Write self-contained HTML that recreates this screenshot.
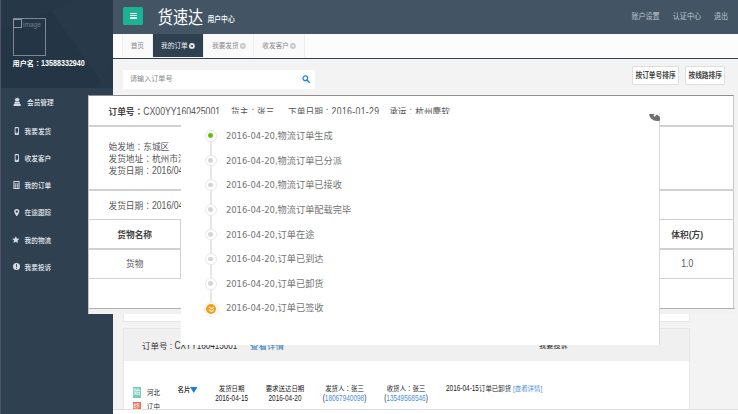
<!DOCTYPE html>
<html lang="zh-CN">
<head>
<meta charset="utf-8">
<title>货速达 用户中心</title>
<style>
html,body{margin:0;padding:0;}
body{width:738px;height:414px;overflow:hidden;position:relative;background:#f3f3f4;font-family:"Liberation Sans","Noto Sans CJK SC",sans-serif;font-size:6.7px;color:#333;}
.abs{position:absolute;}
.nw{white-space:nowrap;}
.L{display:inline-block;transform:scaleY(1.27);transform-origin:0 75%;}
#side{left:0;top:0;width:113px;height:414px;background:#2f4050;}
#sidehead{left:0;top:0;width:113px;height:87.5px;background:#293846;overflow:hidden;}
#edge{left:0;top:0;width:1.2px;height:414px;background:#4f5468;}
.mi{left:0;width:113px;height:27.4px;line-height:27.4px;color:#e3e8ed;font-weight:500;font-size:6.65px;white-space:nowrap;}
.mi span{position:absolute;left:24.5px;top:0.2px;transform:scaleY(1.1);transform-origin:0 50%;}
.mi svg{position:absolute;}
#top{left:113px;top:0;width:625px;height:33.5px;background:#435565;}
#hamb{left:123.1px;top:7px;width:20px;height:17.5px;background:#1ab394;border-radius:1.6px;}
#hamb i{position:absolute;left:6.5px;width:7px;height:1.2px;background:#fff;border-radius:.5px;}
#logo{left:157.8px;top:7.9px;font-size:15.1px;font-weight:400;color:#fff;line-height:20px;transform:scaleY(1.2);transform-origin:0 50%;}
#logo2{left:207.5px;top:14.1px;font-size:6.8px;color:#fff;font-weight:500;line-height:12px;transform:scaleY(1.18);transform-origin:0 50%;}
.tn{top:12.1px;font-size:7.05px;line-height:10px;color:#bcc5cd;transform:scaleY(1.12);transform-origin:0 50%;}
#tabs{left:113px;top:33.5px;width:625px;height:24px;background:#fcfcfc;border-bottom:1px solid #2f4050;}
.tab{top:0.9px;height:23.1px;line-height:23.4px;font-size:6.7px;color:#888;text-align:center;background:#fafafa;border-right:0.5px solid #eee;box-sizing:border-box;}
.tab.act{background:#2f4050;color:#e8edf0;}
.x{display:inline-block;width:5.8px;height:5.8px;vertical-align:-0.9px;margin-left:1.2px;}

#search{left:123px;top:70.3px;width:192.3px;height:18.3px;background:#fff;}
#search span{position:absolute;left:7px;top:0;line-height:18.5px;color:#888;font-size:7.1px;}
.btn{top:66px;height:17px;line-height:17px;border:0.6px solid #dedede;background:#fff;font-weight:bold;color:#444;font-size:6.7px;text-align:center;border-radius:1px;}
.btn span{display:inline-block;transform:scaleY(1.12);}
.panel{background:#fff;border:0.6px solid #e5e6e7;box-sizing:border-box;}
#dlg{left:87.6px;top:95.3px;width:646.2px;height:218.7px;background:#fff;box-sizing:border-box;border-top:1px solid #8e8e8e;border-left:0.8px solid #c4c4c4;border-right:0.7px solid #c8c8c8;border-bottom:0.5px solid #e2e2e2;font-size:8.7px;color:#555;}
.hl{left:0;width:645px;height:1.3px;background:#d0d0d0;}
.vl{width:1px;background:#d0d0d0;top:124px;height:59px;}
.c{width:92.1px;text-align:center;line-height:12px;}
#tl{left:181.2px;top:113.5px;width:478.5px;height:231.7px;overflow:hidden;background:#fff;border-right:0.8px solid #d8d8d8;box-sizing:border-box;}
.node{left:23.8px;width:11.8px;height:11.8px;border-radius:50%;background:#fff;border:1.2px solid #e7e7e7;box-sizing:border-box;}
.node i{position:absolute;left:2.3px;top:2.3px;width:4.8px;height:4.8px;border-radius:50%;background:#d4d4d4;}
.tt{left:44.7px;font-size:9.2px;line-height:12px;color:#747474;white-space:nowrap;}
.tt b{font-weight:normal;font-family:"DejaVu Sans","Liberation Sans",sans-serif;font-size:8.45px;}
.r{font-size:6.45px;line-height:10px;color:#222;text-align:center;white-space:nowrap;}
.r a{color:#4a8fd8;}
</style>
</head>
<body>
<!-- sidebar -->
<div id="side" class="abs"></div>
<div id="sidehead" class="abs">
<svg width="113" height="88" viewBox="0 0 113 88" style="position:absolute;left:0;top:0">
<rect width="113" height="88" fill="#263848"/>
<polygon points="0,30 51.600,11.500 101,80 95,88 0,88" fill="#243646"/>
<polygon points="51.600,11.500 75.700,0 113,0 113,88 106,88" fill="#283a4a"/>
<polygon points="101,80 113,60 113,88 95,88" fill="#273949"/>
</svg>
<div class="abs" style="left:12.5px;top:18px;width:33.300px;height:37.600px;border:0.6px solid #7d8893;box-sizing:border-box;"></div>
<div class="abs" style="left:13.3px;top:19.3px;width:9px;height:9px;border:0.6px solid #8c97a1;box-sizing:border-box;"></div>
<div class="abs nw" style="left:23px;top:20.8px;font-size:6.6px;line-height:8px;color:#707d89;">image</div>
<div class="abs nw" style="left:12.5px;top:59.1px;font-size:7.15px;line-height:10px;color:#fff;font-weight:bold;">用户名<span lang="zh-TW">：</span><span class="L">13588332940</span></div>
</div>
<div id="edge" class="abs"></div>

<div class="abs mi" style="top:88.4px"><svg viewBox="0 0 16 16" preserveAspectRatio="none" style="left:13.0px;top:8.600px;width:8.300px;height:9.000px"><path fill="#d6dce3" d="M8 0l.9 2.800 2.600-2-.9 3 3.200-.6-2.500 2.300L12.300 8H3.700l1-2.500L2.200 3.200l3.200.6-.9-3 2.600 2zM3.300 8.800h9.400l.9 3H2.400zM1.200 12.600h13.600V16H1.200z"/></svg><span style="left:27.0px">会员管理</span></div>
<div class="abs mi" style="top:117.6px"><svg viewBox="0 0 16 16" preserveAspectRatio="none" style="left:13.6px;top:9.3px;width:5.6px;height:7.9px"><path fill="#d6dce3" fill-rule="evenodd" d="M4.500 0h7A2.500 2.500 0 0 1 14 2.500v11A2.500 2.500 0 0 1 11.500 16h-7A2.500 2.500 0 0 1 2 13.500v-11A2.500 2.500 0 0 1 4.500 0zM4.500 2.500v9h7v-9zM8 12.700a1 1 0 1 0 0 2 1 1 0 0 0 0-2z"/></svg><span style="left:24.6px">我要发货</span></div>
<div class="abs mi" style="top:144.5px"><svg viewBox="0 0 16 16" preserveAspectRatio="none" style="left:13.6px;top:9.3px;width:5.6px;height:7.9px"><path fill="#d6dce3" fill-rule="evenodd" d="M4.500 0h7A2.500 2.500 0 0 1 14 2.500v11A2.500 2.500 0 0 1 11.500 16h-7A2.500 2.500 0 0 1 2 13.500v-11A2.500 2.500 0 0 1 4.500 0zM4.500 2.500v9h7v-9zM8 12.700a1 1 0 1 0 0 2 1 1 0 0 0 0-2z"/></svg><span style="left:24.6px">收发客户</span></div>
<div class="abs mi" style="top:171.6px"><svg viewBox="0 0 16 16" preserveAspectRatio="none" style="left:12.9px;top:9.3px;width:7.0px;height:7.9px"><path fill="#d6dce3" fill-rule="evenodd" d="M1 0h14v16H1zM3 2v3h10V2zM3 6.500v2h2.500v-2zm3.700 0v2h2.600v-2zm3.800 0v2H13v-2zM3 9.700v2h2.500v-2zm3.700 0v2h2.600v-2zm3.800 0v2H13v-2zM3 12.800V14h2.500v-1.200zm3.700 0V14h2.600v-1.200zm3.800 0V14H13v-1.200z"/></svg><span style="left:24.6px">我的订单</span></div>
<div class="abs mi" style="top:199.1px"><svg viewBox="0 0 16 16" preserveAspectRatio="none" style="left:12.8px;top:9.5px;width:7.5px;height:7.5px"><path fill="#d6dce3" fill-rule="evenodd" d="M8 0a5.500 5.500 0 0 1 5.500 5.500C13.500 9 8 16 8 16S2.500 9 2.500 5.500A5.500 5.500 0 0 1 8 0zm0 3a2.500 2.500 0 1 0 0 5 2.500 2.500 0 0 0 0-5z"/></svg><span style="left:24.6px">在途跟踪</span></div>
<div class="abs mi" style="top:226.4px"><svg viewBox="0 0 16 16" preserveAspectRatio="none" style="left:12.3px;top:9.6px;width:7.6px;height:7.4px"><path fill="#d6dce3" d="M8 .5l2.300 5 5.400.6-4 3.700 1.100 5.400L8 12.500 3.200 15.200l1.100-5.400-4-3.700 5.400-.6z"/></svg><span style="left:24.6px">我的物流</span></div>
<div class="abs mi" style="top:253.7px"><svg viewBox="0 0 16 16" preserveAspectRatio="none" style="left:12.6px;top:9.8px;width:7.0px;height:7.0px"><path fill="#d6dce3" fill-rule="evenodd" d="M8 0a8 8 0 1 1 0 16A8 8 0 0 1 8 0zM6.800 3l.4 6.500h1.600L9.200 3zM8 10.800a1.300 1.300 0 1 0 0 2.600 1.300 1.300 0 0 0 0-2.600z"/></svg><span style="left:24.6px">我要投诉</span></div>

<!-- top bar -->
<div id="top" class="abs"></div>
<div id="hamb" class="abs"><i style="top:6px"></i><i style="top:8.200px"></i><i style="top:10.400px"></i></div>
<div id="logo" class="abs nw">货速达</div>
<div id="logo2" class="abs nw">用户中心</div>
<div class="abs tn nw" style="left:631.400px">账户设置</div>
<div class="abs tn nw" style="left:672.800px">认证中心</div>
<div class="abs tn nw" style="left:714px">退出</div>

<!-- tabs -->
<div id="tabs" class="abs">
<div class="abs" style="left:0;top:0;width:10px;height:23.600px;border-right:0.5px solid #eee;box-sizing:border-box;"></div>
<div class="abs tab" style="left:10px;width:29.700px;">首页</div>
<div class="abs tab act" style="left:39.700px;width:51.5px;">我的订单<svg class="x" viewBox="0 0 10 10"><circle cx="5" cy="5" r="5" fill="#e6eaed"/><path d="M3.2 3.2l3.600 3.600M6.800 3.200l-3.600 3.600" stroke="#2f4050" stroke-width="1.600"/></svg></div>
<div class="abs tab" style="left:91.200px;width:50.300px;">我要发货<svg class="x" viewBox="0 0 10 10"><circle cx="5" cy="5" r="5" fill="#c6c6c6"/><path d="M3.2 3.2l3.600 3.600M6.800 3.200l-3.600 3.600" stroke="#fafafa" stroke-width="1.500"/></svg></div>
<div class="abs tab" style="left:141.500px;width:50.300px;">收发客户<svg class="x" viewBox="0 0 10 10"><circle cx="5" cy="5" r="5" fill="#c6c6c6"/><path d="M3.2 3.2l3.600 3.600M6.800 3.200l-3.600 3.600" stroke="#fafafa" stroke-width="1.500"/></svg></div>
</div>

<!-- search row -->
<div id="search" class="abs"><span class="nw">请输入订单号</span>
<svg class="abs" style="left:178.800px;top:5px;width:8.200px;height:8.200px" viewBox="0 0 16 16"><circle cx="6.500" cy="6.500" r="4.600" fill="none" stroke="#1f86e0" stroke-width="2.400"/><path d="M10 10l4.500 4.500" stroke="#1f86e0" stroke-width="2.800" stroke-linecap="round"/></svg>
</div>
<div class="abs btn nw" style="left:632.300px;width:44.500px;"><span>按订单号排序</span></div>
<div class="abs btn nw" style="left:685.300px;width:37.800px;"><span>按线路排序</span></div>

<!-- underlying panels -->
<div class="abs panel" style="left:123px;top:314px;width:566.500px;height:8.400px;border-top:none;"></div>
<div class="abs panel" style="left:123px;top:327.800px;width:566.500px;height:90px;">
<div class="abs" style="left:0;top:0;width:565px;height:32.100px;background:#f0f0f0;"></div>
</div>
<div class="abs nw" style="left:142px;top:339.500px;font-size:8.500px;line-height:12px;color:#333;">订单号 : <span class="L" style="font-size:8.100px">CXYY160415001</span></div>
<div class="abs nw" style="left:250px;top:340px;font-size:8.500px;line-height:12px;color:#337ab7;">查看详情</div>
<div class="abs nw" style="left:539px;top:340.500px;font-size:7.200px;line-height:10px;color:#222;">我要投诉</div>

<div class="abs" style="left:132.500px;top:387.300px;width:8.600px;height:10.600px;background:#79c9c0;color:#fff;font-size:7px;line-height:10.600px;text-align:center;">始</div>
<div class="abs r" style="left:147px;top:387.500px;">河北</div>
<div class="abs" style="left:132.500px;top:401.600px;width:8.600px;height:10.600px;background:#ee6a50;color:#fff;font-size:7px;line-height:10.600px;text-align:center;">终</div>
<div class="abs r" style="left:147px;top:401.500px;">辽中</div>
<div class="abs r" style="left:177.500px;top:385px;font-weight:500;">名片</div>
<svg class="abs" style="left:189.500px;top:387px;width:7.500px;height:6px" viewBox="0 0 10 8"><path d="M0 0h10L5 8z" fill="#1c7fd0"/></svg>
<div class="abs r" style="left:201.600px;width:60px;top:383.500px;">发货日期</div>
<div class="abs r" style="left:201.600px;width:60px;top:393.500px;"><span class="L">2016-04-15</span></div>
<div class="abs r" style="left:255px;width:60px;top:383.500px;">要求送达日期</div>
<div class="abs r" style="left:255px;width:60px;top:393.500px;"><span class="L">2016-04-20</span></div>
<div class="abs r" style="left:314.500px;width:60px;top:383.500px;">发货人<span lang="zh-TW">：</span>张三</div>
<div class="abs r" style="left:314.500px;width:60px;top:393.500px;"><span class="L">(<a>18067940098</a>)</span></div>
<div class="abs r" style="left:376px;width:60px;top:383.500px;">收货人<span lang="zh-TW">：</span>张三</div>
<div class="abs r" style="left:376px;width:60px;top:393.500px;"><span class="L">(<a>13549568546</a>)</span></div>
<div class="abs r" style="left:446px;top:383.500px;text-align:left;"><span class="L">2016-04-15</span>订单已卸货 <a>[查看详情]</a></div>

<!-- footer -->
<div class="abs" style="left:113px;top:408.800px;width:625px;height:6px;background:#fff;border-top:0.6px solid #e0e0e0;"></div>

<!-- detail dialog -->
<div id="dlg" class="abs">
<div class="abs nw" style="left:19.900px;top:9.300px;line-height:12px;"><b style="color:#444;">订单号<span lang="zh-TW">：</span></b><span class="L">CX00YY160425001</span><span style="margin-left:1.300px"></span>&nbsp;&nbsp;&nbsp;&nbsp;货主<span lang="zh-TW">：</span>张三<span style="margin-left:4px"></span>&nbsp;&nbsp;&nbsp;&nbsp;下单日期<span lang="zh-TW">：</span><span class="L" style="letter-spacing:0.35px">2016-01-29</span>&nbsp;&nbsp;&nbsp;&nbsp;承运<span lang="zh-TW">：</span>杭州鏖软</div>
<div class="abs hl" style="top:29px"></div>
<div class="abs nw" style="left:19.900px;top:46px;line-height:11.700px;">始发地<span lang="zh-TW">：</span>东城区<br>发货地址<span lang="zh-TW">：</span>杭州市滨江区<br>发货日期<span lang="zh-TW">：</span><span class="L">2016/04/20</span></div>
<div class="abs hl" style="top:93px"></div>
<div class="abs nw" style="left:19.900px;top:103.500px;line-height:12px;">发货日期<span lang="zh-TW">：</span><span class="L">2016/04/25</span></div>
<div class="abs hl" style="top:122.300px"></div>
<div class="abs hl" style="top:152px"></div>
<div class="abs hl" style="top:181.800px"></div>
<div class="abs vl" style="left:91.400px"></div>
<div class="abs vl" style="left:552.500px"></div>
<div class="abs c" style="left:0;top:132.500px;font-weight:bold;color:#444;">货物名称</div>
<div class="abs c" style="left:0;top:162px;">货物</div>
<div class="abs c" style="left:552.600px;top:132.500px;font-weight:bold;color:#444;">体积(方)</div>
<div class="abs c" style="left:552.600px;top:162px;"><span class="L">1.0</span></div>
<div class="abs" style="left:0;top:212.200px;width:646px;height:6px;background:#f1f1f1;border-top:1px solid #b0b0b0;box-sizing:border-box;"></div>
</div>

<!-- timeline dialog -->
<div id="tl" class="abs">
<div class="abs" style="left:28.400px;top:22.4px;width:2.600px;height:172.6px;background:#e6e6e6;"></div>
<div class="abs node" style="top:16.5px"><i style="background:#5fc400"></i></div>
<div class="abs tt" style="top:16.4px"><b>2016-04-20,</b>物流订单生成</div>
<div class="abs node" style="top:41.2px"><i></i></div>
<div class="abs tt" style="top:41.1px"><b>2016-04-20,</b>物流订单已分派</div>
<div class="abs node" style="top:65.8px"><i></i></div>
<div class="abs tt" style="top:65.7px"><b>2016-04-20,</b>物流订单已接收</div>
<div class="abs node" style="top:90.5px"><i></i></div>
<div class="abs tt" style="top:90.4px"><b>2016-04-20,</b>物流订单配载完毕</div>
<div class="abs node" style="top:115.1px"><i></i></div>
<div class="abs tt" style="top:115.0px"><b>2016-04-20,</b>订单在途</div>
<div class="abs node" style="top:139.8px"><i></i></div>
<div class="abs tt" style="top:139.7px"><b>2016-04-20,</b>订单已到达</div>
<div class="abs node" style="top:164.5px"><i></i></div>
<div class="abs tt" style="top:164.4px"><b>2016-04-20,</b>订单已卸货</div>
<div class="abs node" style="top:188.2px;left:22.400px;width:15px;height:15px;border:1px solid #eeeeee;"><i style="left:1.200px;top:1.200px;width:10.600px;height:10.600px;background:#f59d14;"></i><svg class="abs" style="left:3px;top:3.300px;width:7px;height:6.600px" viewBox="0 0 8 8"><path d="M1 1l3 2.400L7 1M1 4.400l3 2.400 3-2.400" fill="none" stroke="#fff" stroke-width="1.300"/></svg></div>
<div class="abs tt" style="top:188.3px"><b>2016-04-20,</b>订单已签收</div>
</div>
<div class="abs" style="left:646px;top:113.900px;width:14px;height:9px;overflow:hidden;">
<svg class="abs" style="left:2.500px;top:-9.400px;width:16px;height:16px" viewBox="0 0 20 20"><circle cx="10" cy="10" r="10" fill="#707070"/><path d="M6.200 6.200l7.600 7.600M13.800 6.200l-7.600 7.600" stroke="#fff" stroke-width="2.200"/></svg>
</div>
</body>
</html>
